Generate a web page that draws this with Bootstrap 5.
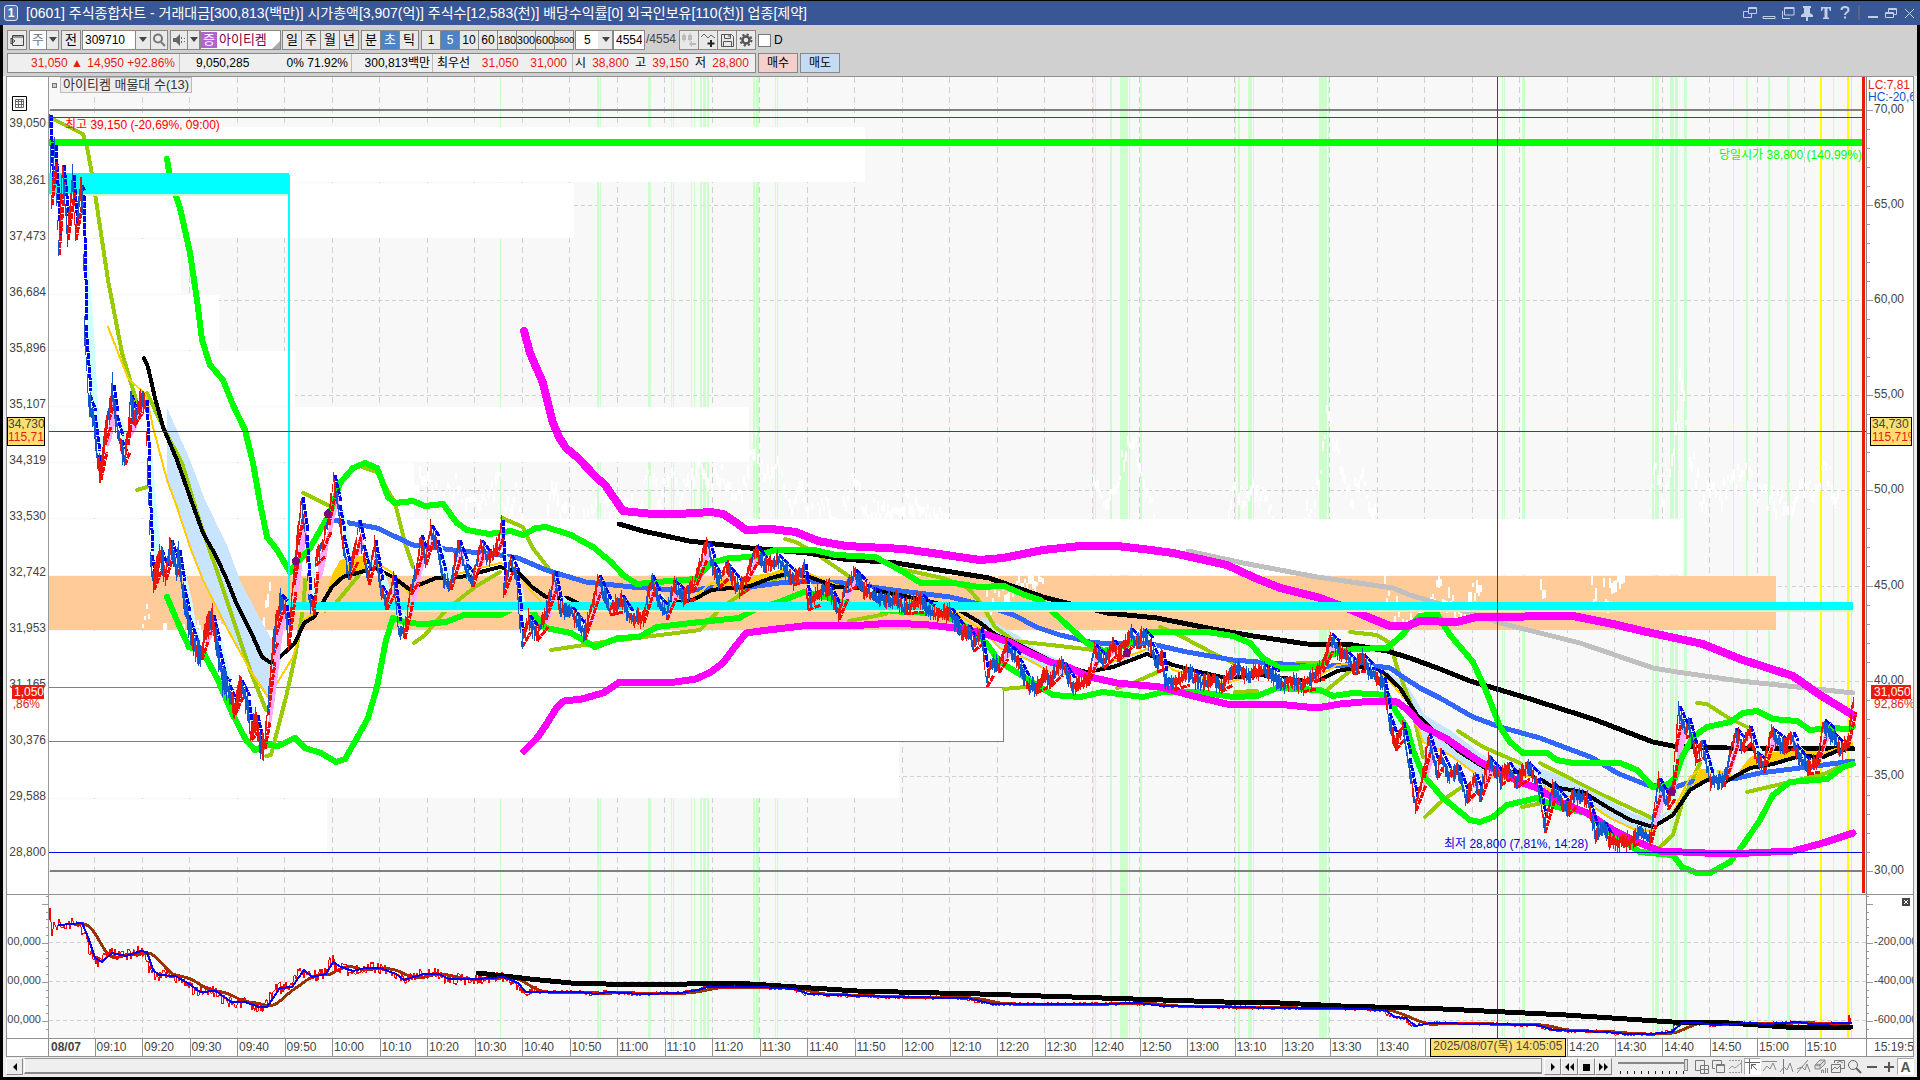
<!DOCTYPE html>
<html lang="ko">
<head>
<meta charset="utf-8">
<meta name="viewport" content="width=device-width, initial-scale=1">
<title>[0601] 주식종합차트</title>
<link rel="stylesheet" href="https://cdn.jsdelivr.net/npm/bootstrap@5.3.0/dist/css/bootstrap.min.css">
<style>
body{font-family:"Liberation Sans","Noto Sans CJK KR",sans-serif;font-size:12px;line-height:16px;color:#000;background:#000;overflow:hidden}
.titlebar{height:25px;background:#3a5795;color:#fff;border-top:1px solid #000;padding:0 2px 0 4px;font-size:14px}
.titlebar .num{width:14px;height:16px;line-height:14px;border:1px solid #dfe6f5;border-radius:3px;background:#5674b0;font-weight:700;text-align:center;font-size:12px}
.titlebar button{background:none;border:0;padding:0;width:19px;height:20px;display:flex;align-items:center;justify-content:center}
.titlebar .winbtn{width:18px}
svg{display:block;flex:none}
.frame{background:#ececec;margin:0 3px 3px;padding:0 3px;flex:1;min-height:0}
.bars{background:#d0d0d0;margin:0 -3px;padding:5px 4px 2px;height:51px;gap:3px}
.tb{height:20px}
.tb button,.tb .fld{height:20px;border:1px solid #888;background:#e9e9e9;padding:0;line-height:16px;text-align:center;flex:none;display:flex;align-items:center;justify-content:center;color:#000;border-radius:0}
.tb button+button,.tb .arrow{margin-left:-1px}
.tb .fld{background:#fff}
.tb input[type=text],.tb select{height:20px;border:1px solid #888;background:#fff;padding:0 2px;border-radius:0;font:inherit;outline:0;flex:none;color:#000}
.tb select{appearance:none}
.tb button.on{background:#4f83c4;color:#fff}
.tb .seg{width:20px}
.tb .kr{font-size:13px}
.tb .num3{font-size:11px}
.tb .num4{font-size:9px}
.w14{width:13px}.w16{width:16px}.w18{width:18px}.w20{width:20px}.w32{width:32px}.w54{width:54px}.w82{width:81px}.w40{width:40px}
.tb .gap2{margin-left:2px}
.tb .gap1{margin-left:1px}
.quote{height:20px;width:749px;border:1px solid #888;background:#efefef;line-height:18px;white-space:pre}
.quote>div{border-right:1px solid #bbb;height:18px;display:flex;align-items:center}
.quote>div:last-child{border-right:0}
.up{color:#e81b0c}
.q1{width:172px;padding:0 4px 0 23px;justify-content:space-between}.q2{width:172px;padding:0 3px 0 16px;justify-content:space-between}.q3{width:81px;padding-right:2px;justify-content:flex-end}.q4{width:140px;padding:0 5px 0 4px;justify-content:space-between}.q5{flex:1;padding:0 6px 0 2px;justify-content:space-between}
.chartbox{border:1px solid #909090;background:#fff;flex:1;min-height:0;display:flex;flex-direction:column}
.panes{flex:1;min-height:0;display:flex}
.axl{width:42px;position:relative;border-right:1px solid #999;overflow:hidden;color:#444}
.axr{width:47px;position:relative;border-left:1px solid #888;overflow:hidden;color:#444}
.plot{flex:1;position:relative;min-width:0;background:#f8f8f8;overflow:hidden}
.plot>svg{width:100%;height:100%;position:absolute;inset:0}
.lab{position:absolute;line-height:14px;margin-top:-8px;white-space:nowrap}
.axl .lab{right:2px}.axr .lab{left:7px}
.axl .sublab,.axr .sublab{font-size:11px}
.axl .sublab{right:7px}
.tick{position:absolute;height:1px;background:#999}
.axl .tick{right:0}.axr .tick{left:0}
.split{position:absolute;left:0;right:0;height:1px;background:#909090}
.curs{position:absolute;height:29px;border:1px solid #000;background:#ffdf70;line-height:13px;overflow:hidden;margin-top:-15px;width:38px}
.axl .curs{right:3px}.axr .curs{left:3px;width:42px;padding-left:1px}
.curs span{display:block;white-space:nowrap}
.nowp{position:absolute;line-height:14px;width:32px;height:14px;margin-top:-7px;background:#e81b0c;color:#fff;overflow:hidden;display:flex}
.note{position:absolute;white-space:nowrap;line-height:14px}
.legend-chip{left:2px;top:0;font-size:13px;color:#333;display:flex;align-items:center}
.legend-chip b{width:5px;height:5px;border:1px solid #777;background:#ccc;margin:0 3px 0 1px}
.legend-chip span{border:1px solid #bbb;background:#eee;padding:0 2px;line-height:14px}
.times{height:18px;border-top:1px solid #909090;display:flex;color:#444;line-height:16px}
.times .sp{width:42px;border-right:1px solid #909090;flex:none}
.times .run{flex:1;display:flex;min-width:0;position:relative}
.times .run div{flex:95 1 0;min-width:0;box-shadow:inset 1px 0 #909090;text-indent:2px;white-space:nowrap}
.times .run div:first-child{flex-grow:91;box-shadow:none;font-weight:700}
.times .run div:last-of-type{flex-grow:123}
.times .end{width:47px;border-left:1px solid #909090;padding-left:7px;overflow:hidden;white-space:nowrap;flex:none}
.tipt{position:absolute;top:-1px;left:76%;width:136px;height:19px;background:#ffdf70;border:1px solid #000;text-align:center;line-height:15px;white-space:nowrap}
.foot{height:20px;padding-top:1px;display:flex;align-items:flex-start;flex:none}
.foot button{height:17px;width:17px;border:1px solid;border-color:#fff #888 #888 #fff;background:#ececec;padding:0;display:flex;align-items:center;justify-content:center;flex:none}
.foot .ic{border-color:transparent}
.foot .ic.act{background:#fff;border-color:#aaa #fff #fff #aaa}
.track{flex:1;height:16px;border:1px solid #999;border-left-color:#fff;border-bottom:2px solid #888;background:#efefef;margin:0 2px 0 1px}
.zoomr{appearance:none;width:70px;height:17px;margin:0 5px 0 6px;background:repeating-linear-gradient(90deg,#222 0 1px,transparent 1px 7px) 2px 13px/68px 3px no-repeat,linear-gradient(#888,#888) 0 4px/70px 2px no-repeat;flex:none}
.zoomr::-webkit-slider-thumb{appearance:none;width:4px;height:12px;background:#ddd;border:1px solid #888;margin-top:-4px}
</style>
<script src="https://cdn.jsdelivr.net/npm/bootstrap@5.3.0/dist/js/bootstrap.bundle.min.js"></script>
</head>
<body class="vh-100 d-flex flex-column m-0">
<header class="titlebar d-flex align-items-center">
 <span class="num">1</span><span class="ms-1 ps-1">[0601] 주식종합차트 - 거래대금[300,813(백만)] 시가총액[3,907(억)] 주식수[12,583(천)] 배당수익률[0] 외국인보유[110(천)] 업종[제약]</span>
 <div class="ms-auto d-flex align-items-center">
  <button aria-label="창 분리"><svg width="14" height="14" fill="none" stroke="#c3cfe8"><path d="M5.5 1.500h8v6h-8zM5.500 2.500h8M5 5.500H.5v6h8V8"/></svg></button>
  <button aria-label="내리기"><svg width="14" height="14" fill="none" stroke="#c3cfe8"><path d="M1 10.500h12v2H1z"/></svg></button>
  <button aria-label="복사"><svg width="14" height="14" fill="none" stroke="#c3cfe8"><path d="M3.500 1.500h9.500v7.500H3.500zM1.500 5v7.500H9M3 2.500h10"/></svg></button>
  <button aria-label="고정"><svg width="14" height="15" fill="#c3cfe8"><path d="M3 0h8v2h-1v5l3 2v2H8v4H6v-4H1V9l3-2V2H3z"/></svg></button>
  <button aria-label="글꼴"><svg width="12" height="14" fill="#c3cfe8"><path d="M1 1h10v4h-1L9 2.500H7.500v9H9V13H3v-1.500h1.500v-9H3L2 5H1z"/></svg></button>
  <button aria-label="도움말"><svg width="10" height="14" fill="none" stroke="#c3cfe8" stroke-width="2"><path d="M1.500 4c0-4 7-4 7 0 0 2.500-3.500 2-3.500 5M5 10.500v2"/></svg></button>
  <svg class="mx-1" width="2" height="16"><path d="M1 0v15" stroke="#777"/></svg>
  <button class="winbtn" aria-label="최소화"><svg width="12" height="14" fill="#c3cfe8"><path d="M1 10h10v2H1z"/></svg></button>
  <button class="winbtn" aria-label="이전 크기로"><svg width="12" height="14" fill="none" stroke="#c3cfe8"><path d="M3.500 6V2.500h8v6H9M4 3.500h7M.5 6.500h8v5h-8zM1 7.500h7"/></svg></button>
  <button class="winbtn" aria-label="닫기"><svg width="11" height="12" stroke="#c3cfe8"><path d="M1 2l9 9M10 2l-9 9"/></svg></button>
 </div>
</header>
<main class="frame d-flex flex-column">
 <div class="bars d-flex flex-column">
  <div class="tb d-flex">
   <button class="w20" aria-label="메뉴"><svg width="14" height="14" fill="none" stroke="#444"><path d="M2.500 2.500h11v10h-11zM2 4h12M1 5v6l4-3z"/></svg></button>
   <div class="fld w18 gap2 kr text-secondary">주</div><button class="w14 arrow" aria-label="종목 구분"></button>
   <button class="w20 gap2 kr">전</button>
   <input class="w54 gap1" type="text" value="309710" aria-label="종목코드"><button class="w16 arrow" aria-label="종목 목록"></button>
   <button class="w18" aria-label="검색"><svg width="14" height="14" fill="none" stroke="#777" stroke-width="2"><circle cx="6" cy="5.500" r="4"/><path d="M9 9l4 4"/></svg></button>
   <button class="w18 gap2" aria-label="소리"><svg width="13" height="12" fill="#666"><path d="M0 4h3l4-4v12L3 8H0zM8 3h1v2H8zm0 4h1v2H8zm3-3h1v1h-1zm0 3h1v1h-1z"/></svg></button><button class="w14 arrow" aria-label="소리 설정"></button>
   <div class="fld w82 kr justify-content-start position-relative" style="color:#7a0046"><span class="text-white" style="background:#b163cf;margin-right:2px;padding:0 2px">증</span>아이티켐<svg class="position-absolute end-0 bottom-0" width="8" height="8" fill="#aaa"><path d="M8 0v8H0z"/></svg></div>
   <button class="seg kr gap1">일</button><button class="seg kr">주</button><button class="seg kr">월</button><button class="seg kr">년</button>
   <button class="seg kr gap2">분</button><button class="seg kr on">초</button><button class="seg kr">틱</button>
   <button class="seg gap2">1</button><button class="seg on">5</button><button class="seg">10</button><button class="seg">60</button><button class="seg num3">180</button><button class="seg num3">300</button><button class="seg num3">600</button><button class="seg num4">3600</button>
   <select class="gap1" style="width:38px;padding-left:8px;background:#fff linear-gradient(#e9e9e9,#e9e9e9) right/14px 20px no-repeat" aria-label="틱 수"><option>5</option></select><svg style="margin:7px 2px 0 -11px" width="8" height="6" fill="#444"><path d="M0 0h8L4 5z"/></svg>
   <input class="w32 gap1" type="text" value="4554" aria-label="조회 개수"><span style="line-height:19px;color:#444;width:34px;padding-left:1px">/4554</span>
   <button class="w20" aria-label="이전 데이터"><svg width="16" height="16" fill="#bbb"><path d="M1 3h4v5H1zM7 3h4v5H7zM2.500 1h1v9h-1zM8.500 1h1v9h-1zM11 9l-3 3 3 3v-2h4v-2h-4z"/></svg></button>
   <button class="w20" aria-label="지표 추가"><svg width="16" height="16" fill="none" stroke="#666"><path d="M1 5l3-3 4 4 3-3 4 3"/><path d="M11 8v7M7.500 11.500h7" stroke="#222" stroke-width="2"/></svg></button>
   <button class="w20" aria-label="저장"><svg width="15" height="15" fill="none" stroke="#555"><path d="M1.500 1.500h10l2 2v10h-12zM4.500 1.500v4h6v-4M3.500 13V8.500h8V13M9 2v2"/></svg></button>
   <button class="w20" aria-label="설정"><svg width="14" height="14" fill="none" stroke="#555"><circle cx="7" cy="7" r="3.500" stroke-width="2.500"/><circle cx="7" cy="7" r="5.500" stroke-width="2" stroke-dasharray="2.200 2.100"/></svg></button>
   <label class="d-flex align-items-center gap2" style="gap:3px"><input type="checkbox" class="m-0" style="appearance:none;width:13px;height:13px;background:#fff;border:1px solid #777">D</label>
  </div>
  <div class="d-flex tb">
   <div class="quote d-flex">
    <div class="q1 up"><span>31,050 ▲</span><span>14,950 +92.86%</span></div>
    <div class="q2"><span>9,050,285</span><span>0% 71.92%</span></div>
    <div class="q3">300,813백만</div>
    <div class="q4"><span>최우선</span><span class="up">31,050</span><span class="up">31,000</span></div>
    <div class="q5"><span>시</span><span class="up">38,800</span><span>고</span><span class="up">39,150</span><span>저</span><span class="up">28,800</span></div>
   </div>
   <button class="w40 gap2" style="background:#f5cfca">매수</button><button class="w40 gap2" style="background:#c3dcf3">매도</button>
  </div>
 </div>
 <section class="chartbox">
  <div class="panes">
   <div class="axl" id="axl"><svg class="position-absolute" style="left:5px;top:19px" width="15" height="15" fill="none" stroke="#666"><path stroke="#000" d="M.5.5h14v14H.5z"/><path d="M3.500 3.500h8v8h-8zM3 5.500h9M6.500 3v9M9.500 3v9M3 8.500h9"/></svg></div>
   <div class="plot" id="plot">
    <svg id="g" viewBox="49 77 1817 961" preserveAspectRatio="none" shape-rendering="crispEdges" fill="none" role="img" aria-label="아이티켐 5초 차트"></svg>
    <div class="note legend-chip"><b></b><span>아이티켐 매물대 수(13)</span></div>
   </div>
   <div class="axr" id="axr"><div class="note up" style="left:1px;top:1px">LC:7,81</div><div class="note" style="left:1px;top:13px;color:#1155cc">HC:-20,69</div></div>
  </div>
  <div class="times"><div class="sp"></div><div class="run" id="run"></div><div class="end">15:19:55</div></div>
 </section>
 <div class="foot">
  <button aria-label="왼쪽으로"><svg width="6" height="8"><path d="M5 0v8L1 4z"/></svg></button>
  <div class="track"></div>
  <button aria-label="재생"><svg width="6" height="8"><path d="M1 0v8l4-4z"/></svg></button>
  <button aria-label="뒤로"><svg width="11" height="8"><path d="M5 0v8L1 4zM10 0v8L6 4z"/></svg></button>
  <button aria-label="정지"><svg width="7" height="8"><path d="M0 1h7v7H0z"/></svg></button>
  <button aria-label="앞으로"><svg width="11" height="8"><path d="M1 0v8l4-4zM6 0v8l4-4z"/></svg></button>
  <input type="range" class="zoomr" value="100" aria-label="확대 비율">
  <button class="ic" aria-label="창 추가"><svg width="15" height="15" fill="none" stroke="#777"><path d="M6 11.500H1.500v-10h9V6M6.500 6.500h8v8h-8zM10.500 7v7M7 10.500h7"/></svg></button>
  <button class="ic" aria-label="창 겹치기"><svg width="15" height="15" fill="none" stroke="#777"><path d="M4 9.500H1.500v-8h9V5M5.500 5.500h8v8h-8zM5 6.500h9"/></svg></button>
  <button class="ic" aria-label="영역"><svg width="15" height="15" fill="none" stroke="#999"><path d="M1 1.500h13M1 13.500h13" stroke-dasharray="2 1"/><path d="M1 10l3-3 3 2 6-5M13.500 1v12"/></svg></button>
  <button class="ic act" aria-label="십자선"><svg width="15" height="15" fill="none" stroke="#666"><path d="M0 3.500h15M4.500 0v15M6 5l6 6M6.500 10V5.500H11"/></svg></button>
  <button class="ic" aria-label="수평선"><svg width="15" height="15" fill="none" stroke="#888"><path d="M0 2.500h15M1 12l4-5 3 3 3-6 3 7"/></svg></button>
  <button class="ic" aria-label="수직선"><svg width="15" height="15" fill="none" stroke="#888"><path d="M4.500 0v15" stroke="#86a"/><path d="M1 13l4-5 3 3 3-7 3 9"/></svg></button>
  <button class="ic" aria-label="추세선"><svg width="15" height="15" fill="none" stroke="#888"><path d="M1 14L12 1M1 10l5-2 3 3 2-6 3 8"/></svg></button>
  <button class="ic" aria-label="지우개"><svg width="15" height="15" fill="#ddd" stroke="#888"><path d="M2 6l5-5h5L7 6zM2 6h5v4H2zM7 6l5-5v4l-5 5M8.500 14v-3h2v3M12.500 9v5M14.500 9v5"/></svg></button>
  <button class="ic" aria-label="겹쳐보기"><svg width="15" height="15" fill="none" stroke="#777"><path d="M4.500 4V1.500h10v8H11M1.500 5.500h9v8h-9zM2 11l3-3 2 2 3-3M7 4l3-2 3 2"/></svg></button>
  <button class="ic" aria-label="돋보기"><svg width="15" height="15" fill="none" stroke="#666"><circle cx="6" cy="6" r="4.500"/><path d="M9 9l5 5" stroke-width="2"/></svg></button>
  <button class="ic" aria-label="축소"><svg width="12" height="12" stroke="#555" stroke-width="2"><path d="M1 6h10"/></svg></button>
  <button class="ic" aria-label="확대"><svg width="12" height="12" stroke="#555" stroke-width="2"><path d="M1 6h10M6 1v10"/></svg></button>
  <button class="ic act" aria-label="자동" style="color:#555;font-weight:700;font-size:14px">A</button>
 </div>
</main>
<script>
document.querySelectorAll('.arrow').forEach(b=>b.innerHTML='<svg width="8" height="6" fill="#444"><path d="M0 0h8L4 5z"/></svg>');
const out=[];
const P=(d,c,w,x='')=>out.push(`<path d="${d}" stroke="${c}" stroke-width="${w}" ${x}/>`);
const R=(x,y,x2,y2,c,x3='')=>out.push(`<rect x="${x}" y="${y}" width="${x2-x}" height="${y2-y}" fill="${c}" ${x3}/>`);
const pts=s=>s.trim().split(/\s+/).map(p=>p.split(',').map(Number));
const L=(s,c,w)=>P('M'+s.trim().replace(/\s+/g,'L'),c,w,'stroke-linejoin="round" stroke-linecap="round"');
let seed=7;const rnd=()=>(seed=(seed*16807)%2147483647)/2147483647;
const interp=a=>x=>{if(x<=a[0][0])return a[0][1];for(let i=1;i<a.length;i++)if(x<=a[i][0]){const p=a[i-1],q=a[i];return p[1]+(q[1]-p[1])*(x-p[0])/((q[0]-p[0])||1)}return a[a.length-1][1]};

/* grid */
for(let i=0;i<9;i++){const y=110.500+i*95.100;P(`M49 ${y}H1862`,'#d0d0d0',1,'stroke-dasharray="4 3"')}
for(const y of[942.5,981.5,1020.500])P(`M49 ${y}H1866`,'#d0d0d0',1,'stroke-dasharray="4 3"');
for(let i=0;i<37;i++)P(`M${94.5+i*47.5} 77V1038`,'#d0d0d0',1,'stroke-dasharray="6 4"');
/* signal bands */
for(const[x,w]of[[500,1],[597,2],[600,1],[648,3],[671,1],[673,1],[691,1],[694,1],[700,2],[703,3],[707,2],[753,2],[756,3],[775,1],[777,1],[1093,1],[1095,1],[1110,2],[1120,8],[1129,1],[1140,2],[1235,1],[1238,2],[1248,4],[1253,1],[1319,8],[1328,1],[1502,1],[1504,1],[1522,3],[1652,2],[1655,4],[1670,4],[1675,3],[1684,3],[1733,1],[1746,2],[1768,2],[1787,3],[1833,1]])R(x,77,x+w,1038,'#ccffcc');
for(const[x,w]of[[1820,2],[1847,2],[1851,1]])R(x,77,x+w,1038,'#ffff00');
/* volume profile */
const ys=[127,182,238,294,350,406,462,518,575,630,687,741,798,854],xs=[865,574,181,219,295,749,414,1683,1776,1190,1003,899,327];
xs.forEach((x,i)=>R(49,ys[i]+(i?1:0),x,ys[i+1],i==8?'#ffcc99':'#fff'));
P('M49 687.500H1003.500V741.500H49','#808080',1);
/* faint turnover line */
const W=(s,a)=>{const f=interp(pts(s)),q=pts(s),e=q[q.length-1][0];let d='';for(let x=q[0][0];x<e;x+=2){const y=f(x)+(rnd()-.5)*a;d+=`M${x} ${y|0}v${4+rnd()*10|0}`}P(d,'#fff',2)};
W('414,500 420,470 430,475 440,500 455,482 470,500 500,480 505,510 515,490 525,518',22);W('546,515 554,485 560,510 575,515 590,515 600,480 612,510 640,500 651,472 660,495 672,475 682,495 692,470 700,460 711,475 720,468 738,492 748,470 756,437 765,470 776,462 792,500 801,470 808,515 825,505 840,518 853,480 868,510 905,500 950,518',22);
W('1090,500 1095,480 1103,505 1117,475 1125,450 1133,430 1141,465 1155,510',22);W('1227,515 1236,480 1245,505 1253,480 1275,515',18);W('1305,515 1315,490 1322,460 1328,400 1335,440 1350,495 1362,475 1377,515',22);
W('1650,510 1655,470 1665,500 1677,420 1681,360 1690,450 1700,490 1720,495 1740,470 1760,490 1780,500 1810,490 1822,470 1840,490',26);
W('985,575 990,610 996,580 1010,600 1020,578 1045,577',14);W('1385,578 1392,620 1400,600 1407,630 1425,600 1440,585 1460,620 1475,585 1482,580',26);W('1541,576 1544,605 1547,576',10);W('1592,576 1594,600 1597,576',10);W('1604,576 1607,610 1610,580 1626,576',10);W('143,625 147,605 150,628',12);W('160,630 190,628 230,625 262,628 268,590 271,576',14);
/* long averages */
L('1188,551 1243,563 1317,577 1393,588 1410,595 1467,612 1500,623 1580,643 1653,668 1677,672 1740,681 1807,688 1853,693','#c0c0c0',5);
P('M167 408L190 460 205 500 227 545 240 580 258 615 270 637 283 655 268 697 250 670 228 630 203 580 190 547 177 507 167 480Z','none',0,'fill="#c8e4ff"');
P('M979 615L1000 625 1020 637 1040 652 1060 660 1090 672 1115 663 1145 650 1145 656 1113 668 1080 678 1050 672 1029 662 1000 648Z','none',0,'fill="#c8e4ff"');
P('M1383 668L1400 680 1410 690 1425 715 1450 730 1480 753 1500 765 1530 765 1553 773 1583 785 1607 799 1630 812 1652 820 1670 810 1653 832 1640 833 1610 818 1583 800 1553 793 1530 777 1500 780 1480 777 1450 755 1423 742 1410 705Z','none',0,'fill="#c8e4ff"');
const ol=['49,117 83,134 87,147 93,180 108,280 122,353 137,403','147,393 163,427 182,463 197,513 220,580 250,670 266,710','137,490 147,487','266,756 271,755 286,697 295,657 304,603 305,580','303,493 328,505','362,467 377,472 395,503 405,543 413,567','325,611 336,603 359,575','414,643 425,635 446,610 475,587 500,572','502,518 523,527 532,547 552,573','551,650 604,642 700,630 721,608 750,588 786,575','785,539 796,542 818,555 850,577','849,621 886,614','900,569 943,578 968,588 980,602 995,627 1014,641 1060,646 1093,650','1004,689 1025,687','1160,627 1173,632 1207,650 1233,663','1117,688 1133,683 1160,671','1235,692 1257,691','1297,663 1320,663','1350,632 1377,635 1390,643 1397,667 1412,707 1423,757','1328,689 1350,671','1425,817 1443,800 1462,787','1458,731 1483,747 1520,763','1522,807 1543,803','1540,763 1573,780 1607,797 1652,818','1660,847 1673,835 1683,800 1700,763','1697,703 1707,704 1727,717 1747,727','1747,792 1790,782 1827,773 1847,763'];
ol.forEach(s=>L(s,'#99cc00',4));
L('333,520 377,528 413,545 461,551 500,555 518,558 546,570 586,582 632,587 689,591 714,587 750,587 779,583 804,581 843,583 893,590 950,597 979,604 1014,615 1036,627 1060,635 1090,642 1110,644 1147,643 1187,652 1233,660 1283,664 1317,667 1360,664 1390,668 1403,677 1420,688 1440,698 1473,717 1500,727 1540,738 1593,758 1617,773 1647,785 1673,788 1687,783 1707,778 1733,779 1760,773 1800,768 1853,761','#3366ff',5);
L('619,524 643,531 689,541 750,548 807,553 843,559 896,563 989,578 1029,592 1043,597 1087,608 1107,613 1157,618 1213,629 1253,636 1307,644 1353,645 1387,651 1410,658 1440,669 1470,681 1527,698 1593,719 1653,742 1673,746 1727,748 1853,749','#000',5);
P('M321 610L332 575 340 560 352 556 368 556 385 567 375 570 343 579 332 589ZM1690 790L1700 769 1720 770 1735 776 1750 757 1770 752 1800 750 1823 752 1853 742V748L1823 757 1800 756 1773 764 1750 768 1727 781 1707 780ZM711 590L718 580 771 573 786 567 807 573V576L786 574 750 586Z','none',0,'fill="#ffcc00"');
L('108,327 128,378 146,395 153,427 167,480 177,507 190,547 203,580 228,630 250,670 268,697 279,680 293,657 304,620 321,608 340,562 352,557 375,562 393,573 410,594 430,580 461,573 500,563 515,567 530,590 546,607 560,607 586,612 600,607 643,604 693,598 711,583 750,580 771,574 786,568 807,573 836,585 868,590 904,598 954,612 979,628 1000,648 1029,660 1050,672 1080,676 1113,662 1147,649 1173,670 1200,677 1227,683 1260,673 1307,683 1337,665 1360,662 1387,678 1410,705 1423,742 1450,755 1480,777 1500,775 1530,776 1553,793 1583,800 1610,818 1640,832 1653,830 1673,812 1690,777 1700,769','#ffcc00',2);
L('144,358 148,367 155,398 163,427 177,460 190,497 203,533 217,558 227,580 237,605 250,630 262,657 271,663 282,655 295,643 304,623 314,617 332,587 343,577 375,568 393,577 409,589 436,578 461,577 500,567 518,572 532,587 546,597 568,598 586,607 643,607 693,600 711,590 750,586 771,578 786,574 807,576 836,587 868,589 904,596 954,607 979,622 996,635 1014,642 1060,665 1087,672 1113,667 1147,654 1173,665 1200,672 1227,678 1260,675 1307,681 1320,680 1337,671 1360,667 1383,672 1400,688 1417,715 1433,730 1460,752 1485,768 1507,772 1530,773 1553,787 1583,792 1607,807 1630,820 1653,827 1673,815 1690,790 1707,780 1727,781 1750,768 1773,764 1800,756 1823,757 1837,751 1853,748','#000',4);
/* price ribbon between two short averages */
const px=pts('49,120 51,200 54,150 58,250 62,170 67,235 72,180 75,235 80,190 82,200 84,330 88,400 93,420 97,460 100,475 104,440 108,415 112,390 115,420 120,445 124,460 127,440 130,400 134,420 140,400 145,405 147,470 150,560 153,585 160,555 165,575 170,545 176,570 178,555 182,590 187,620 195,650 201,655 205,630 212,620 217,650 222,680 228,690 234,710 240,685 247,705 250,735 256,720 260,748 264,744 267,710 272,650 275,630 280,600 285,610 288,640 293,580 297,540 301,502 305,540 308,600 313,610 315,560 322,545 328,520 333,480 338,510 342,540 348,575 355,550 358,525 362,550 368,580 374,545 380,590 386,605 393,580 398,630 404,634 410,590 416,570 420,540 425,560 430,530 436,545 443,580 450,585 458,545 465,570 472,582 480,545 487,560 495,552 501,525 503,590 510,560 516,580 519,620 521,642 528,620 536,636 545,615 554,576 559,610 571,612 584,635 598,580 609,610 621,600 630,620 643,618 651,580 657,600 666,615 673,586 682,598 693,587 704,548 708,546 712,567 718,583 725,567 739,590 746,577 755,550 764,567 777,560 793,580 804,569 807,605 818,593 829,590 838,615 845,587 854,575 864,590 879,600 896,600 904,609 921,600 932,615 950,613 961,634 968,630 973,646 980,632 986,682 991,663 998,668 1005,647 1018,663 1027,686 1036,688 1045,675 1050,681 1060,663 1063,667 1072,687 1087,681 1094,650 1103,663 1113,645 1117,657 1130,634 1135,643 1143,634 1150,647 1157,667 1162,657 1164,680 1173,685 1187,673 1200,684 1213,681 1220,687 1230,673 1238,669 1247,677 1263,670 1277,680 1283,685 1293,680 1302,687 1313,677 1322,667 1330,639 1337,650 1347,657 1353,669 1362,659 1370,673 1383,682 1388,718 1395,745 1402,727 1408,763 1415,806 1423,773 1428,738 1437,773 1440,755 1448,777 1457,770 1465,798 1475,779 1479,797 1488,762 1500,780 1508,767 1515,783 1527,767 1537,783 1544,828 1552,787 1567,811 1573,795 1587,800 1595,835 1603,827 1609,843 1633,841 1637,831 1650,838 1653,813 1658,783 1667,805 1672,787 1675,747 1678,711 1685,733 1688,723 1695,757 1702,745 1710,782 1723,782 1735,733 1742,747 1749,731 1755,757 1763,768 1770,733 1783,747 1792,737 1795,750 1807,769 1817,760 1823,725 1832,737 1840,751 1847,743 1853,700');
const f=interp(px),ma=(x,n)=>{let s=0;for(let i=0;i<n;i++)s+=f(x-i);return s/n};
let pk='',cy='';
for(let x=50;x<1853;x++){const a=ma(x,5),b=ma(x,15);if(a<b)pk+=`M${x+.5} ${a|0}V${b|0}`;else cy+=`M${x+.5} ${b|0}V${a|0}`}
P(pk,'#ffaaff',1);P(cy,'#ccffff',1);
/* bands */
L('167,159 170,178 180,208 190,253 197,300 202,340 210,365 223,380 233,405 245,430 253,463 260,503 267,537 277,550 290,572 295,565 310,548 330,513 340,483 353,468 365,463 377,468 388,497 395,503 413,501 425,506 443,504 457,523 467,530 489,534 511,531 523,535 536,528 546,527 571,535 593,547 611,562 623,575 637,584 657,582 696,579 711,563 729,558 753,557 775,550 814,550 836,555 875,557 900,570 921,583 954,583 979,587 1004,586 1025,595 1040,600 1067,625 1087,643 1103,651 1127,645 1147,632 1207,632 1233,636 1250,643 1263,658 1280,668 1320,667 1330,655 1353,649 1387,648 1400,637 1420,616 1437,614 1450,635 1473,662 1487,693 1500,727 1510,742 1523,753 1547,753 1557,760 1573,763 1620,763 1637,770 1653,787 1667,785 1675,778 1682,757 1693,737 1707,727 1730,722 1743,713 1757,711 1773,719 1797,721 1810,730 1830,728 1850,729 1853,726','#00ff00',6);
L('167,597 178,623 189,647 203,652 218,680 232,713 246,740 255,750 268,745 278,746 295,738 305,748 321,753 336,762 345,759 357,738 368,718 377,687 386,640 393,618 407,623 425,624 446,622 464,615 500,615 521,605 529,608 546,628 571,633 595,647 618,638 639,637 657,627 700,622 739,618 754,610 779,602 804,592 829,598 857,607 904,612 936,613 961,623 986,643 1000,662 1029,680 1053,695 1080,697 1103,692 1143,697 1163,692 1200,692 1233,697 1257,696 1277,688 1320,690 1333,696 1353,693 1387,695 1397,713 1407,728 1413,750 1423,775 1443,798 1470,820 1480,822 1493,817 1507,805 1537,798 1557,807 1587,813 1607,830 1640,852 1673,855 1682,867 1697,873 1710,873 1730,862 1743,845 1760,820 1773,795 1790,782 1827,779 1843,767 1853,764','#00ff00',6);
L('524,331 530,353 543,383 553,423 559,437 566,448 578,458 596,477 605,485 623,511 653,514 678,514 711,512 723,514 734,521 746,530 771,529 796,532 818,541 846,546 903,549 939,554 980,560 1003,558 1043,550 1080,546 1117,546 1143,549 1173,553 1200,559 1227,565 1253,577 1280,588 1317,597 1347,608 1370,618 1390,626 1407,626 1420,621 1457,622 1477,617 1573,616 1613,624 1647,632 1703,644 1740,659 1793,676 1820,695 1853,715','#ff00ff',8);
L('524,751 537,738 546,725 557,707 564,701 582,699 603,693 620,682 668,683 696,679 711,672 723,663 734,648 746,633 768,630 811,625 864,625 893,623 929,625 964,629 989,635 1011,643 1030,653 1050,662 1070,668 1090,677 1117,683 1160,687 1193,696 1227,704 1277,704 1317,708 1340,704 1373,701 1397,702 1408,710 1422,726 1447,739 1480,762 1500,772 1520,782 1537,788 1560,802 1587,813 1613,830 1640,843 1660,851 1727,854 1793,851 1823,843 1853,833','#ff00ff',7);
/* base lines */
R(49,139,1862,146,'#00ff00');R(49,173,289,194,'#00ffff');R(49,194,289,196,'#ccffcc');R(288,175,290,606,'#00ffff');R(290,602,1853,610,'#00ffff');R(290,610,1853,612,'#ccffcc');
/* parabolic dots and candles */
let up='',dn='',bd='',rd='';
for(let i=1;i<px.length;i++){const[a,b]=px[i-1],[c,d]=px[i];if(Math.abs(d-b)<9)continue;
 if(d>b)bd+=`M${a+2} ${b-5}L${c+3} ${d-9}`;else rd+=`M${a+1} ${b+5}L${c+3} ${d+12}`}
P(bd,'#0000ff',3,'stroke-dasharray="6 1"');P(rd,'#ff0000',3,'stroke-dasharray="6 1"');
for(let x=49;x<=1853;x++){const y=f(x)+(rnd()-.5)*6,s=f(x+1)-f(x-1),h=(x<300?10:6)*(.5+rnd());const q=`M${x+.5} ${y-h|0}V${y+h|0}`;if((s<0)!==(rnd()<.22))up+=q;else dn+=q}
P(dn,'#1158cc',1);P(up,'#e8190c',1);
for(const[x,y]of[[296,560],[328,513],[1127,652],[1672,791]])P(`M${x-4} ${y}l4-5 4 5-1 5h-6z`,'none',0,'fill="#800080"');
/* levels and crosshair */
R(50,109,1862,111,'#808080');R(50,870,1862,872,'#808080');R(49,117,1862,118,'#e60000');R(49,852,1862,853,'#0000e6');R(49,431,1866,432,'#e60000');R(1497,77,1498,1038,'#e60000');R(1862,77,1865,893,'#e81b0c');R(49,894,1866,895,'#909090');
/* lower pane */
const sb=pts('59,925 82,923 88,937 95,958 102,962 112,953 126,956 141,951 147,952 153,970 159,975 175,976 188,983 200,992 216,991 231,1002 245,1002 259,1007 267,1007 280,988 292,987 304,970 312,977 326,974 333,962 341,967 353,971 365,968 380,968 396,974 404,980 424,974 439,974 449,979 478,979 504,977 518,983 526,992 580,992 596,994 608,992 640,994 680,993 698,990 708,987 760,987 796,989 808,994 894,997 967,998 992,1004 1102,1004 1139,1003 1163,1006 1286,1008 1329,1008 1386,1010 1394,1017 1406,1018 1415,1026 1431,1023 1484,1024 1537,1025 1553,1030 1606,1032 1627,1034 1651,1034 1672,1032 1682,1023 1700,1023 1713,1025 1749,1023 1766,1024 1798,1022 1811,1024 1851,1023'),sf=interp(sb);
let r='M49 920L50 908 52 936 54 922 57 930 ',br='';
for(let x=59;x<1852;x+=1){r+=`${x} ${(sf(x+3)+(rnd()-.5)*(x<540?12:4)).toFixed(1)} `}
for(let x=74;x<1852;x+=3){let s=0;for(let i=0;i<22;i++)s+=sf(x-i);br+=`${br?'L':'M'}${x} ${(s/22).toFixed(1)}`}
P('M333 965V955M1849 1026V1015M1850 1024V1018','#ff0000',2);P(br,'#993300',3);P(r,'#ff0000',1);
L('478,973 530,979 571,983 640,985 735,983 857,991 980,994 1224,1002 1280,1003 1341,1006 1443,1009 1566,1015 1627,1019 1672,1022 1729,1023 1786,1027 1851,1027','#000',5);
L(sb.map(p=>p.join(',')).join(' '),'#0000ff',2);
document.getElementById('g').innerHTML=out.join('');
/* axes: positions are shares of the pane height */
const T=y=>((y-77)/961*100).toFixed(3)+'%',add=(id,h)=>document.getElementById(id).insertAdjacentHTML('beforeend',h);
[[39050,124],[38261,181],[37473,237],[36684,293],[35896,349],[35107,405],[34319,461],[33530,517],[32742,573],[31953,629],[31165,685],[30376,741],[29588,797],[28800,853]].forEach(([v,y])=>add('axl',`<div class="lab" style="top:${T(y)}">${v.toLocaleString('en')}</div>`));
for(let i=0;i<9;i++)add('axr',`<div class="lab" style="top:${T(110+i*95.1)}">${70-i*5},00</div><div class="tick" style="width:6px;top:${T(110+i*95.1)}"></div>`);
for(let i=0;i<41;i++)add('axr',`<div class="tick" style="width:3px;top:${T(110+i*19.020)}"></div>`);
[[942,'00,000','-200,000'],[981,'00,000','-400,000'],[1020,'00,000','-600,000']].forEach(([y,s,t])=>{add('axl',`<div class="lab sublab" style="top:${T(y)}">${s}</div>`);add('axr',`<div class="lab sublab" style="top:${T(y)}">${t}</div>`)});
for(let i=0;i<18;i++)for(const id of['axl','axr'])add(id,`<div class="tick" style="width:${i%5==1?6:2}px;top:${T(896+i*7.8)}"></div>`);
for(const id of['axl','axr'])add(id,`<div class="split" style="top:${T(894)}"></div><div class="curs" style="top:${T(432)}"><span>34,730</span><span class="up">${id=='axl'?'115,71':'115,71%'}</span></div>`);
add('axl',`<div class="nowp justify-content-end" style="right:4px;top:${T(692)}">1,050</div><div class="lab up" style="right:8px;top:${T(705)}">,86%</div>`);
add('axr',`<div class="nowp" style="left:4px;width:40px;padding-left:3px;top:${T(692)}">31,050</div><div class="lab up" style="top:${T(705)}">92,86%</div><svg class="position-absolute" style="right:3px;top:${T(898)}" width="8" height="8"><path fill="#444" d="M0 0h8v8H0z"/><path stroke="#fff" d="M2 2l4 4M6 2L2 6"/></svg>`);
const N=(x,y,c,t)=>add('plot',`<div class="note" style="left:${((x-49)/1817*100).toFixed(3)}%;top:${T(y)};color:${c}">${t}</div>`);
N(65,118,'#f00','최고 39,150 (-20,69%, 09:00)');N(1719,148,'#0f0','당일시가 38,800 (140,99%)');N(1444,837,'#00d','최저 28,800 (7,81%, 14:28)');
/* the crosshair time chip stands in place of 13:50 to 14:10 */
let h='<div>08/07</div>';for(let i=1;i<38;i++){const m=540+i*10;h+=`<div>${i>28&&i<32?'':String(m/60|0).padStart(2,'0')+':'+String(m%60).padStart(2,'0')}</div>`}
document.getElementById('run').innerHTML=h;
add('run','<span class="tipt">2025/08/07(목) 14:05:05</span>');
</script>
</body>
</html>
